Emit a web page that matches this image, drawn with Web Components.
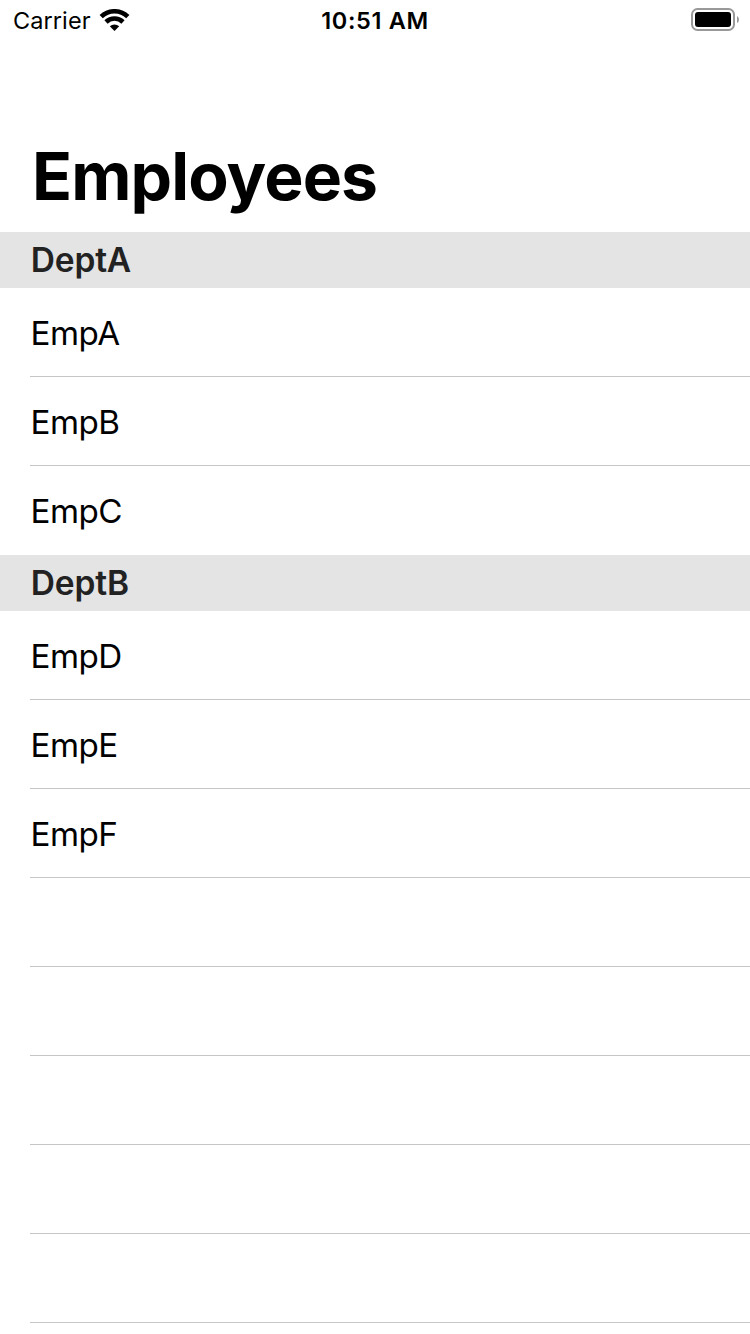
<!DOCTYPE html>
<html lang="en"><head><meta charset="utf-8"><title>Employees</title>
<style>html,body{margin:0;background:#fff}body{font-family:Inter,"Liberation Sans",sans-serif;color:#000;overflow:hidden}</style></head>
<body><employee-app></employee-app>
<script>
const define=(name,html)=>customElements.define(name,class extends HTMLElement{
  constructor(){super();const t=document.createElement('template');t.innerHTML=html;this.attachShadow({mode:'open'}).append(t.content.cloneNode(true));}
});
define('status-bar',`<style>
:host{display:grid;grid-template-columns:1fr auto 1fr;align-items:center;height:40px;box-sizing:border-box;padding:0 11px 0 13px;font-size:24px;line-height:40px}
.left{display:flex;align-items:center;gap:9px}
.left span{width:77px;font-size:23.5px;letter-spacing:.08px}
.time{font-weight:600;font-size:23.5px;letter-spacing:.65px;margin-left:-2px}
.left span,.time{padding-top:2px;line-height:38px}
.battery{justify-self:end}svg{display:block}
</style>
<div class="left"><span>Carrier</span><svg width="31" height="22" viewBox="0 0 31 22"><g fill="none" stroke="#000" stroke-width="4.6"><path d="M2.2 7.7A19 19 0 0 1 28.8 7.7"/><path d="M7 13A12.2 12.2 0 0 1 24 13"/></g><path d="M10.8 17.3A7.2 7.2 0 0 1 20.2 17.3L15.5 22Z"/></svg></div>
<div class="time">10:51 AM</div>
<svg class="battery" width="48" height="24" viewBox="0 0 48 24"><rect x="1" y="1" width="42" height="21" rx="5.5" fill="none" stroke="#999" stroke-width="2"/><rect x="4" y="4" width="36" height="15" rx="3"/><path d="M46 8Q48 9 48 11.5T46 15Z" fill="#999"/></svg>`);
define('page-title',`<style>:host{display:block;box-sizing:border-box;height:192px;padding:96px 32px 0;font-size:66px;line-height:80px;font-weight:700;letter-spacing:-.9px}</style><slot></slot>`);
define('section-header',`<style>:host{display:block;box-sizing:border-box;height:56px;padding-left:30.7px;background:#e4e4e4;color:#222;font-size:33.5px;line-height:57px;font-weight:600;letter-spacing:-.15px}</style><slot></slot>`);
define('list-row',`<style>:host{display:block;box-sizing:border-box;height:89px;margin-left:30px;padding-left:.5px;border-bottom:1px solid #c6c6c8;font-size:33.2px;line-height:90px;letter-spacing:-.5px}:host([last]){border-bottom-color:transparent}</style><slot></slot>`);
define('employee-app',`<style>:host{display:block;width:750px;height:1334px;overflow:hidden}</style>
<status-bar></status-bar><page-title>Employees</page-title>
<section-header>DeptA</section-header>
<list-row>EmpA</list-row><list-row>EmpB</list-row><list-row last>EmpC</list-row>
<section-header>DeptB</section-header>
<list-row>EmpD</list-row><list-row>EmpE</list-row><list-row>EmpF</list-row>
<list-row></list-row><list-row></list-row><list-row></list-row><list-row></list-row><list-row></list-row>`);
</script></body></html>
